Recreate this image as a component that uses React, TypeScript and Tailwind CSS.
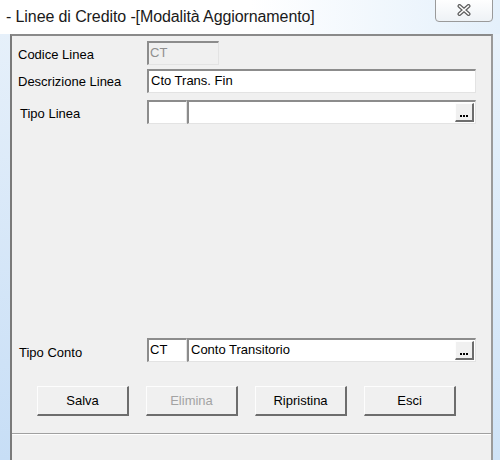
import React from 'react';

const font = { fontFamily: '"Liberation Sans", Arial, sans-serif' };

const sunken =
  'border-t-[2px] border-l-[2px] border-b border-r border-t-[#8c8c8c] border-l-[#8c8c8c] border-b-[#e3e3e3] border-r-[#e3e3e3]';

const raised =
  'border-t border-l border-b-[2px] border-r-[2px] border-t-[#fdfdfd] border-l-[#fdfdfd] border-b-[#6d6d6d] border-r-[#6d6d6d]';

function Ellipsis() {
  return (
    <div
      className={`absolute right-[1px] top-[1px] bottom-[1px] w-[19px] bg-[#f0f0f0] ${raised} flex items-end justify-center pb-[3px]`}
    >
      <div className="flex gap-[1px]">
        <span className="w-[2px] h-[2px] bg-black" />
        <span className="w-[2px] h-[2px] bg-black" />
        <span className="w-[2px] h-[2px] bg-black" />
      </div>
    </div>
  );
}

function Lookup({ code, text }: { code: string; text: string }) {
  return (
    <div className="flex h-[24px] w-[329px]">
      <div className={`w-[40px] h-full bg-white ${sunken} px-[1px] leading-[20px] text-[13px] text-black`}>
        {code}
      </div>
      <div className={`relative flex-1 h-full bg-white ${sunken} px-[2px] leading-[20px] text-[13px] text-black`}>
        {text}
        <Ellipsis />
      </div>
    </div>
  );
}

function Button({ label, disabled }: { label: string; disabled?: boolean }) {
  return (
    <div
      className={`w-[92px] h-[30px] bg-[#f0f0f0] ${raised} flex items-center justify-center text-[13px] ${
        disabled ? 'text-[#a3a3a3]' : 'text-black'
      }`}
    >
      {label}
    </div>
  );
}

export default function App() {
  return (
    <div className="w-[500px] h-[460px] flex flex-col bg-white overflow-hidden" style={font}>
      {/* Title bar */}
      <div className="relative h-[34px] shrink-0 bg-gradient-to-r from-white via-white to-[#e4f0fb]">
        <span className="absolute left-[6px] top-[5px] text-[16px] text-[#1a1a1a] tracking-[-0.1px]">
          - Linee di Credito -[Modalità Aggiornamento]
        </span>
        <div className="absolute left-[435px] top-[-2px] w-[58px] h-[24px] rounded-b-[4px] border border-[#9a9a9a] bg-gradient-to-b from-white to-[#eef2f6] flex items-center justify-center">
          <svg width="14" height="12" viewBox="0 0 14 12">
            <path d="M2.5 2 L11.5 10 M11.5 2 L2.5 10" stroke="#5e5e5e" strokeWidth="4" strokeLinecap="round" />
            <path d="M2.5 2 L11.5 10 M11.5 2 L2.5 10" stroke="#fff" strokeWidth="1.6" strokeLinecap="round" />
          </svg>
        </div>
      </div>

      <div className="flex flex-1">
        {/* left frame */}
        <div className="w-[10px] shrink-0 bg-gradient-to-b from-[#e6f0fa] to-[#c7def6]" />

        {/* Client area */}
        <div className="w-[483px] shrink-0 flex flex-col bg-[#f0f0f0] border-t-[2px] border-l-[2px] border-r-[2px] border-t-[#8a8a8a] border-l-[#7a7a7a] border-r-[#9a9a9a]">
          <div className="flex flex-col pl-[6px] pt-[5px]">
            <div className="flex items-center h-[24px]">
              <span className="w-[129px] pt-[4px] text-[13px] text-black">Codice Linea</span>
              <div
                className={`w-[72px] h-[24px] bg-[#f0f0f0] ${sunken} px-[1px] leading-[20px] text-[13px] text-[#8f8f8f]`}
              >
                CT
              </div>
            </div>
            <div className="flex items-center h-[24px] mt-[4px]">
              <span className="w-[129px] pt-[2px] text-[13px] text-black">Descrizione Linea</span>
              <div
                className={`w-[329px] h-[24px] bg-white ${sunken} px-[2px] leading-[20px] text-[13px] text-black`}
              >
                Cto Trans. Fin
              </div>
            </div>
            <div className="flex items-center h-[24px] mt-[7px]">
              <span className="w-[129px] pl-[2px] pt-[3px] text-[13px] text-black">Tipo Linea</span>
              <Lookup code="" text="" />
            </div>
            <div className="flex items-center h-[24px] mt-[214px]">
              <span className="w-[129px] pl-[1px] pt-[5px] text-[13px] text-black">Tipo Conto</span>
              <Lookup code="CT" text="Conto Transitorio" />
            </div>
          </div>

          <div className="flex gap-[17px] pl-[25px] mt-[24px]">
            <Button label="Salva" />
            <Button label="Elimina" disabled />
            <Button label="Ripristina" />
            <Button label="Esci" />
          </div>

          <div className="mt-[17px] h-[2px] border-t border-t-[#a0a0a0] border-b border-b-white" />
          <div className="flex-1" />
        </div>

        {/* right frame */}
        <div className="flex-1 bg-gradient-to-b from-[#e8f2fb] to-[#cfe3f7]" />
      </div>
    </div>
  );
}
